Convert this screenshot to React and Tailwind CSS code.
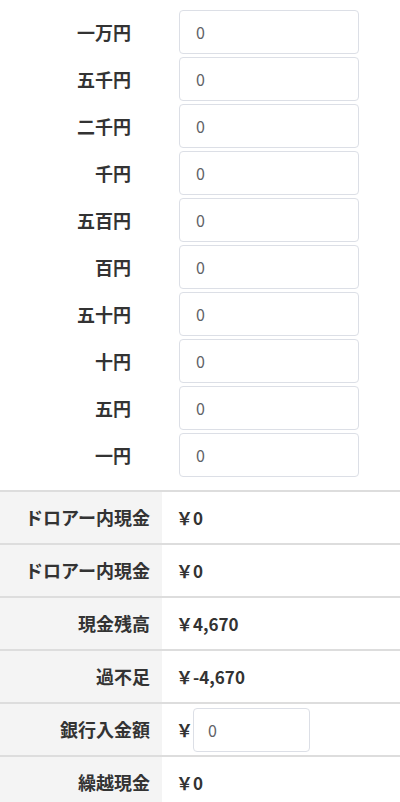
const coins = ['一万円', '五千円', '二千円', '千円', '五百円', '百円', '五十円', '十円', '五円', '一円']

const rows = [
  { label: 'ドロアー内現金', value: '0' },
  { label: 'ドロアー内現金', value: '0' },
  { label: '現金残高', value: '4,670' },
  { label: '過不足', value: '-4,670' },
  { label: '銀行入金額', input: true },
  { label: '繰越現金', value: '0' },
]

const font = { fontFamily: '"Noto Sans CJK JP", "Noto Sans", sans-serif' }

export default function App() {
  return (
    <div className="w-[400px] h-[802px] overflow-hidden bg-white text-[#333]" style={font}>
      <div className="pt-[10px] pb-[13px] flex flex-col gap-[3px]">
        {coins.map((c) => (
          <div key={c} className="flex items-center h-[44px]">
            <label className="w-[131px] text-right text-[18px] font-bold leading-none">{c}</label>
            <input
              readOnly
              value="0"
              className="ml-[48px] w-[180px] h-[44px] rounded border border-[#dcdfe6] px-4 text-[16px] text-[#606266] outline-none"
            />
          </div>
        ))}
      </div>
      <div className="border-t-2 border-[#ddd]">
        {rows.map((r, i) => (
          <div key={i} className="flex h-[53px] border-b-2 border-[#ddd]">
            <div className="w-[162px] bg-[#f4f4f4] flex items-center justify-end pr-[12px] text-[18px] font-bold">
              {r.label}
            </div>
            <div className="flex items-center pl-[14px] text-[17px] font-bold">
              <span>￥</span>
              {r.input ? (
                <input
                  readOnly
                  value="0"
                  className="w-[117px] h-[44px] rounded border border-[#dcdfe6] px-[14px] text-[16px] font-normal text-[#606266] outline-none"
                />
              ) : (
                <span>{r.value}</span>
              )}
            </div>
          </div>
        ))}
      </div>
    </div>
  )
}
